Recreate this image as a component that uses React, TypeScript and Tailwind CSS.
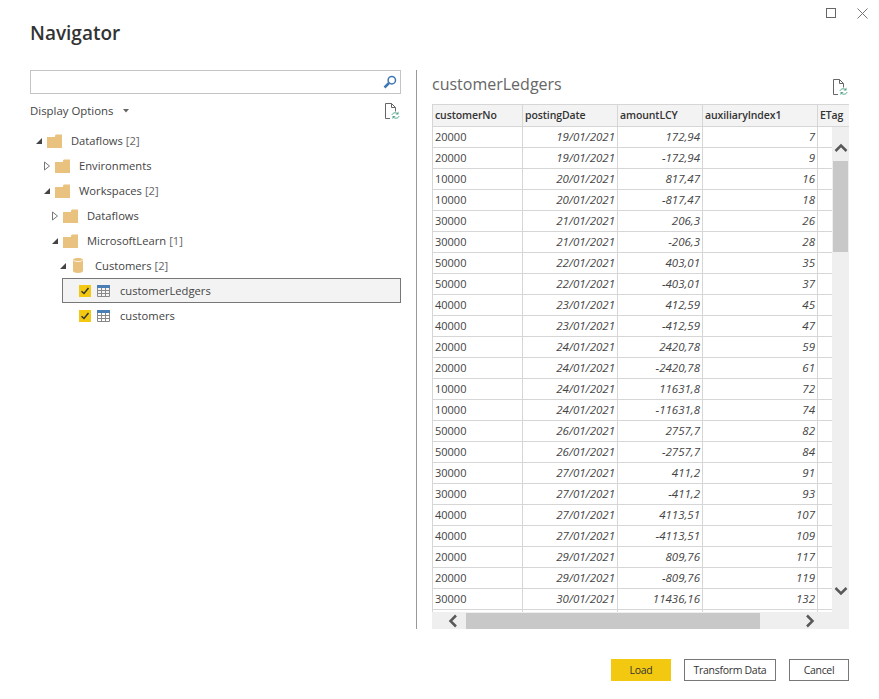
const font = "[font-family:'Open_Sans','Noto_Sans',sans-serif]";

const rows: [string, string, string, string][] = [
  ['20000', '19/01/2021', '172,94', '7'],
  ['20000', '19/01/2021', '-172,94', '9'],
  ['10000', '20/01/2021', '817,47', '16'],
  ['10000', '20/01/2021', '-817,47', '18'],
  ['30000', '21/01/2021', '206,3', '26'],
  ['30000', '21/01/2021', '-206,3', '28'],
  ['50000', '22/01/2021', '403,01', '35'],
  ['50000', '22/01/2021', '-403,01', '37'],
  ['40000', '23/01/2021', '412,59', '45'],
  ['40000', '23/01/2021', '-412,59', '47'],
  ['20000', '24/01/2021', '2420,78', '59'],
  ['20000', '24/01/2021', '-2420,78', '61'],
  ['10000', '24/01/2021', '11631,8', '72'],
  ['10000', '24/01/2021', '-11631,8', '74'],
  ['50000', '26/01/2021', '2757,7', '82'],
  ['50000', '26/01/2021', '-2757,7', '84'],
  ['30000', '27/01/2021', '411,2', '91'],
  ['30000', '27/01/2021', '-411,2', '93'],
  ['40000', '27/01/2021', '4113,51', '107'],
  ['40000', '27/01/2021', '-4113,51', '109'],
  ['20000', '29/01/2021', '809,76', '117'],
  ['20000', '29/01/2021', '-809,76', '119'],
  ['30000', '30/01/2021', '11436,16', '132'],
];

const gridCols = 'grid grid-cols-[90px_95px_85px_115px_32px]';
const cell = 'border-r border-b border-[#d6d6d6] px-[2px] overflow-hidden whitespace-nowrap';

function Arrow({ open }: { open: boolean }) {
  return (
    <svg width="8" height="10" viewBox="0 0 8 10" className="shrink-0">
      {open ? (
        <path d="M7 2v6H1z" fill="#444" />
      ) : (
        <path d="M1.500 1v8l5-4z" fill="#fff" stroke="#777" />
      )}
    </svg>
  );
}

function Folder() {
  return (
    <svg width="15" height="14" viewBox="0 0 15 14" className="shrink-0">
      <path d="M0 3h8V1.500L9 .5h6V14H0z" fill="#e8c27e" />
    </svg>
  );
}

function Cylinder() {
  return (
    <svg width="10" height="15" viewBox="0 0 10 15" className="shrink-0">
      <path d="M0 2c0-2.600 10-2.600 10 0v11c0 2.600-10 2.600-10 0z" fill="#e8c27e" />
      <path d="M.5 2.500c2 1.400 7 1.400 9 0" fill="none" stroke="#fff" strokeWidth=".8" />
    </svg>
  );
}

function TableIcon() {
  return (
    <svg width="13" height="12" viewBox="0 0 13 12" className="shrink-0">
      <rect x="0" y="0" width="13" height="3" fill="#4a7fb5" />
      <path
        d="M.5 3v8.500h12V3M.5 5.500h12M.5 8.500h12M4.500 3v8.500M8.500 3v8.500"
        fill="none"
        stroke="#888"
      />
    </svg>
  );
}

function Check() {
  return (
    <span className="flex h-3 w-3 shrink-0 items-center justify-center bg-[#f2c811]">
      <svg width="10" height="10" viewBox="0 0 10 10">
        <path d="M1.500 5.200 4 7.500 8.500 2" fill="none" stroke="#333" strokeWidth="1.500" />
      </svg>
    </span>
  );
}

function RefreshPage() {
  return (
    <svg width="15" height="16" viewBox="0 0 15 16">
      <path d="M5 15.500H.5V.5h6l4 4v4M6.500.5v4h4" fill="none" stroke="#666" />
      <path d="M7 12c.3-2.200 3.600-3 5.500-1.300M14 13c-.3 2.200-3.600 3-5.500 1.300" fill="none" stroke="#5aa58a" />
      <path d="M13.500 8.500v3h-3zM7.500 16v-3h3z" fill="#5aa58a" />
    </svg>
  );
}

function SearchIcon() {
  return (
    <svg width="14" height="14" viewBox="0 0 14 14">
      <circle cx="8.800" cy="5.200" r="3.700" fill="none" stroke="#3f77b5" strokeWidth="1.500" />
      <path d="M6 8 1.500 12.500" stroke="#3f77b5" strokeWidth="2.500" />
    </svg>
  );
}

function Chevron({ d }: { d: string }) {
  return (
    <svg width="14" height="14" viewBox="0 0 14 14">
      <path d={d} fill="none" stroke="#595959" strokeWidth="2.500" />
    </svg>
  );
}

function TreeRow({
  indent,
  open,
  icon,
  label,
  count,
}: {
  indent: string;
  open: boolean;
  icon: React.ReactNode;
  label: string;
  count?: string;
}) {
  return (
    <div className={`flex h-[25px] items-center ${indent}`}>
      <Arrow open={open} />
      <span className="ml-[4px] flex w-[24px] shrink-0">{icon}</span>
      <span className="pt-[2px] text-[#444]">{label}</span>
      {count && <span className="ml-[3px] pt-[2px] text-[#666]">{count}</span>}
    </div>
  );
}

function LeafRow({ selected, label }: { selected?: boolean; label: string }) {
  return (
    <div
      className={`ml-[32px] flex h-[25px] items-center pl-[16px] ${
        selected ? 'border border-[#777] bg-[#f3f3f3]' : 'border border-transparent'
      }`}
    >
      <Check />
      <span className="ml-[6px] flex w-[23px] shrink-0">
        <TableIcon />
      </span>
      <span className="pt-[2px] text-[#444]">{label}</span>
    </div>
  );
}

export default function App() {
  return (
    <div className={`flex h-[699px] w-[879px] flex-col bg-white text-[11.2px] ${font}`}>
      <div className="flex h-[8px] justify-end">
        <div className="flex gap-[21px] pt-[8px] pr-[11px]">
          <span className="h-[10px] w-[10px] border border-[#666]" />
          <svg width="11" height="11" viewBox="0 0 11 11">
            <path d="M.5.500l10 10M10.500.500l-10 10" stroke="#777" />
          </svg>
        </div>
      </div>
      <h1 className="mt-[11px] ml-[30px] h-[51px] text-[19px] leading-[28px] font-semibold text-[#333]">Navigator</h1>
      <div className="flex h-[559px] pl-[30px]">
        <div className="w-[371px]">
          <div className="flex h-[24px] items-center justify-end border border-[#c4c4c4] pr-[3px]">
            <SearchIcon />
          </div>
          <div className="mt-[6px] flex h-[22px] items-center justify-between pr-[1px]">
            <div className="flex items-center gap-[10px] text-[11.4px] text-[#444]">
              <span>Display Options</span>
              <svg width="6" height="4" viewBox="0 0 6 4">
                <path d="M0 0h6L3 3.500z" fill="#666" />
              </svg>
            </div>
            <RefreshPage />
          </div>
          <div className="mt-[6px]">
            <TreeRow indent="pl-[5px]" open icon={<Folder />} label="Dataflows" count="[2]" />
            <TreeRow indent="pl-[13px]" open={false} icon={<Folder />} label="Environments" />
            <TreeRow indent="pl-[13px]" open icon={<Folder />} label="Workspaces" count="[2]" />
            <TreeRow indent="pl-[21px]" open={false} icon={<Folder />} label="Dataflows" />
            <TreeRow indent="pl-[21px]" open icon={<Folder />} label="MicrosoftLearn" count="[1]" />
            <TreeRow indent="pl-[29px]" open icon={<span className="ml-[2px]"><Cylinder /></span>} label="Customers" count="[2]" />
            <LeafRow selected label="customerLedgers" />
            <LeafRow label="customers" />
          </div>
        </div>
        <div className="mx-[15px] w-px bg-[#999]" />
        <div className="w-[417px]">
          <div className="flex h-[34px] items-start justify-between">
            <span className="text-[16px] leading-[28px] text-[#666]">customerLedgers</span>
            <span className="mt-[9px] mr-[1px]">
              <RefreshPage />
            </span>
          </div>
          <div className="relative h-[525px] overflow-hidden">
            <div className={`${gridCols} h-[23px] border-t border-l border-[#d6d6d6] bg-[#f3f3f3] text-[10.5px] leading-[21px] font-semibold tracking-[-0.1px] text-[#333]`}>
              {['customerNo', 'postingDate', 'amountLCY', 'auxiliaryIndex1', 'ETag'].map((h) => (
                <div key={h} className={cell}>
                  {h}
                </div>
              ))}
            </div>
            {rows.map((r, i) => (
              <div key={i} className={`${gridCols} h-[21px] border-l border-[#d6d6d6] text-[11.5px] leading-[20px] text-[#444]`}>
                <div className={`${cell} text-[11px]`}>{r[0]}</div>
                <div className={`${cell} text-right italic`}>{r[1]}</div>
                <div className={`${cell} text-right italic`}>{r[2]}</div>
                <div className={`${cell} text-right italic`}>{r[3]}</div>
                <div className={cell} />
              </div>
            ))}
            <div className={`${gridCols} h-[21px] border-l border-[#d6d6d6]`}>
              <div className={cell} />
              <div className={cell} />
              <div className={cell} />
              <div className={cell} />
              <div className={cell} />
            </div>
            {/* vertical scrollbar */}
            <div className="absolute top-[23px] right-0 bottom-[17px] flex w-[17px] flex-col items-center bg-[#efefef]">
              <span className="mt-[14px] flex h-[20px] items-start">
                <Chevron d="M1.500 10 7 4.500l5.500 5.500" />
              </span>
              <div className="h-[91px] w-[15px] bg-[#c8c8c8]" />
              <span className="mt-[332px]">
                <Chevron d="M1.500 4 7 9.500 12.500 4" />
              </span>
            </div>
            {/* horizontal scrollbar */}
            <div className="absolute right-0 bottom-0 left-0 flex h-[17px] items-center bg-[#efefef]">
              <span className="ml-[14px] flex w-[20px]">
                <Chevron d="M10 1.500 4.500 7l5.500 5.500" />
              </span>
              <div className="h-[16px] w-[294px] bg-[#c8c8c8]" />
              <span className="ml-[43px]">
                <Chevron d="M4 1.500 9.500 7 4 12.500" />
              </span>
            </div>
          </div>
        </div>
      </div>
      <div className="mt-[30px] flex justify-end gap-[13px] pr-[30px] text-[10.5px] leading-[20px] tracking-[-0.3px] text-[#333]">
        <button className="h-[22px] w-[60px] bg-[#f2c811]">Load</button>
        <button className="h-[22px] w-[92px] border border-[#777]">Transform Data</button>
        <button className="h-[22px] w-[60px] border border-[#777]">Cancel</button>
      </div>
    </div>
  );
}
